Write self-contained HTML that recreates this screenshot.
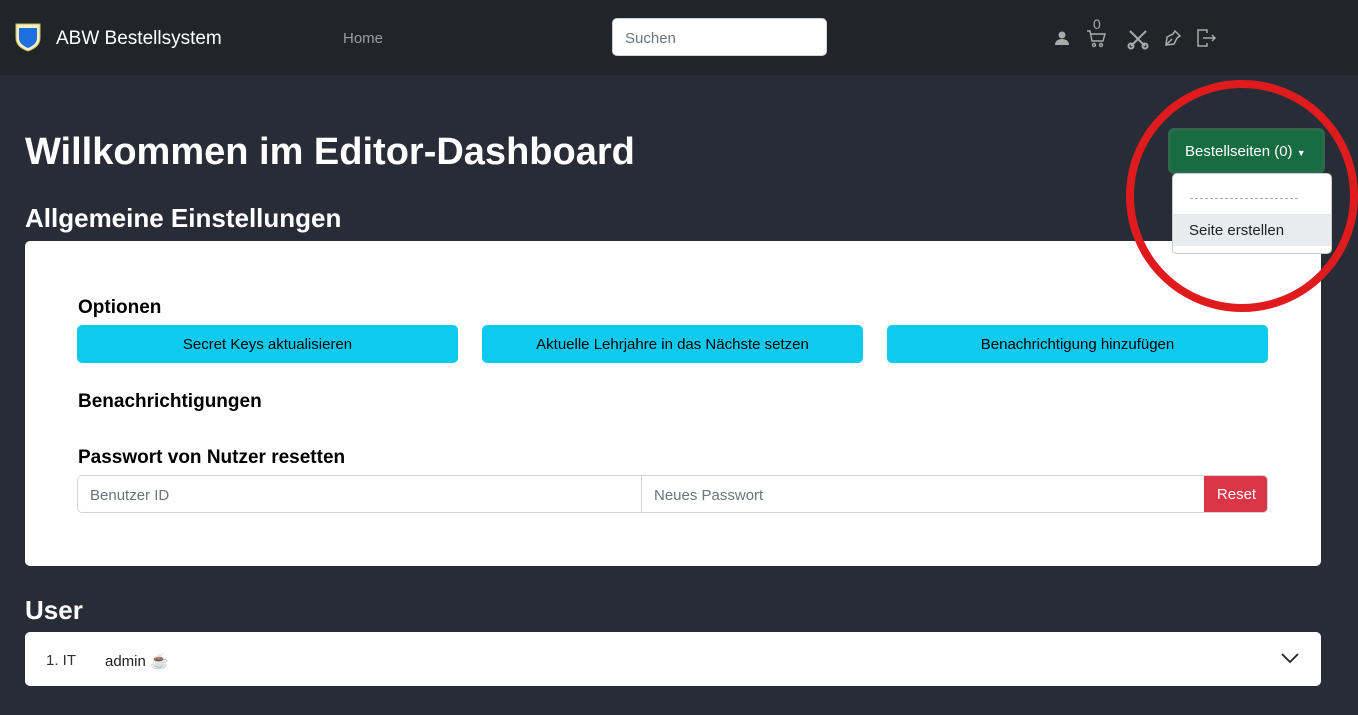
<!DOCTYPE html>
<html><head><meta charset="utf-8"><style>
*{box-sizing:border-box;margin:0;padding:0}
body{width:1358px;height:715px;overflow:hidden;background:#282c36;font-family:"Liberation Sans",sans-serif;color:#212529;position:relative}
.nav{position:absolute;left:0;top:0;width:1358px;height:75px;background:#212529}
.abs{position:absolute}
.h1{left:25px;top:131px;font-size:38px;font-weight:bold;color:#fff}
.h2{font-size:26px;font-weight:bold;color:#fff}
.card{position:absolute;background:#fff;border-radius:5px}
.btn{position:absolute;background:#0dcaf0;border-radius:5px;height:38px;top:325px;width:381px;font-size:15px;text-align:center;line-height:40px;color:#000}
.h5{position:absolute;font-size:19px;font-weight:bold;color:#000;left:78px}
</style></head><body>
<div class="nav">
<svg class="abs" style="left:13px;top:22px" width="30" height="30" viewBox="0 0 30 30"><path d="M3 2h24v14c0 7-6 11-12 13C9 27 3 23 3 16z" fill="#f4f0c8" stroke="#c9b94a"/><path d="M6 6h18v10c0 5-4 8-9 10-5-2-9-5-9-10z" fill="#1e6fe0"/></svg>
<div class="abs" style="left:56px;top:28px;color:#fff;font-size:19px">ABW Bestellsystem</div>
<div class="abs" style="left:343px;top:30px;color:#9a9da0;font-size:15px">Home</div>
<div class="abs" style="left:612px;top:18px;width:215px;height:38px;background:#fff;border:1px solid #ced4da;border-radius:5px;padding:11px 12px;font-size:15px;color:#6c757d">Suchen</div>
<svg class="abs" style="left:1054px;top:30px" width="16" height="16" viewBox="0 0 16 16" fill="#aaa"><circle cx="8" cy="5" r="3.5"/><path d="M1 15c0-4 3-6 7-6s7 2 7 6z"/></svg>
<div class="abs" style="left:1093px;top:16px;color:#aaa;font-size:14px">0</div>
<svg class="abs" style="left:1086px;top:30px" width="20" height="18" viewBox="0 0 20 18" fill="none" stroke="#aaa" stroke-width="1.4"><path d="M1 1h3l2 10h11l2-7H5"/><circle cx="8" cy="15" r="1.5"/><circle cx="15" cy="15" r="1.5"/></svg>
<svg class="abs" style="left:1127px;top:28px" width="22" height="22" viewBox="0 0 22 22" fill="none" stroke="#aaa" stroke-width="2"><path d="M3 3l15 15M19 3L4 18"/><circle cx="4" cy="18" r="2.5"/><circle cx="18" cy="18" r="2.5"/></svg>
<svg class="abs" style="left:1164px;top:29px" width="18" height="18" viewBox="0 0 18 18" fill="none" stroke="#aaa" stroke-width="1.5"><path d="M11 2l5 5-3 2-3 6-8 1 1-8 6-3z M2 16l6-6"/></svg>
<svg class="abs" style="left:1197px;top:29px" width="19" height="18" viewBox="0 0 19 18" fill="none" stroke="#aaa" stroke-width="1.5"><path d="M10 4V1H1v16h9v-3M6 9h12M15 6l3 3-3 3"/></svg>
</div>
<div class="abs h1">Willkommen im Editor-Dashboard</div>
<div class="abs h2" style="left:25px;top:203px">Allgemeine Einstellungen</div>
<div class="card" style="left:25px;top:241px;width:1296px;height:325px"></div>
<div class="h5" style="top:297px">Optionen</div>
<div class="btn" style="left:77px">Secret Keys aktualisieren</div>
<div class="btn" style="left:482px">Aktuelle Lehrjahre in das Nächste setzen</div>
<div class="btn" style="left:887px">Benachrichtigung hinzufügen</div>
<div class="h5" style="top:391px">Benachrichtigungen</div>
<div class="h5" style="top:447px">Passwort von Nutzer resetten</div>
<div class="abs" style="left:77px;top:475px;width:1191px;height:38px;border:1px solid #ced4da;border-radius:5px;font-size:15px;color:#6c757d;overflow:hidden">
<div class="abs" style="left:12px;top:11px">Benutzer ID</div>
<div class="abs" style="left:563px;top:0;width:1px;height:38px;background:#ced4da"></div>
<div class="abs" style="left:576px;top:11px">Neues Passwort</div>
<div class="abs" style="left:1126px;top:-1px;width:65px;height:38px;background:#dc3545;color:#fff;text-align:center;line-height:40px">Reset</div>
</div>
<div class="abs h2" style="left:25px;top:595px">User</div>
<div class="card" style="left:25px;top:632px;width:1296px;height:54px"></div>
<div class="abs" style="left:46px;top:652px;font-size:15px;color:#333">1. IT</div>
<div class="abs" style="left:105px;top:652px;font-size:15px;color:#222">admin ☕</div>
<svg class="abs" style="left:1281px;top:652px" width="18" height="12" viewBox="0 0 18 12" fill="none" stroke="#222" stroke-width="1.8"><path d="M1 2l8 8 8-8"/></svg>
<div class="abs" style="left:1168px;top:128px;width:157px;height:46px;background:#2b6b4c;border-radius:6px"></div>
<div class="abs" style="left:1171px;top:131px;width:151px;height:40px;background:#176c42;border-radius:5px;color:#fff;font-size:15px;line-height:42px;padding-left:14px">Bestellseiten (0) <span style="font-size:9px">▼</span></div>
<div class="abs" style="left:1172px;top:173px;width:160px;height:81px;background:#fff;border:1px solid #ccc;border-radius:5px;overflow:hidden">
<div class="abs" style="left:17px;top:24px;width:108px;border-top:1px dashed #aaa"></div>
<div class="abs" style="left:0;top:40px;width:160px;height:32px;background:#e9ecef;font-size:15px;color:#222;padding:8px 16px">Seite erstellen</div>
</div>
<svg class="abs" style="left:1120px;top:78px" width="238" height="240"><ellipse cx="122" cy="118" rx="112" ry="112" fill="none" stroke="#e01b1e" stroke-width="8"/></svg>
</body></html>
